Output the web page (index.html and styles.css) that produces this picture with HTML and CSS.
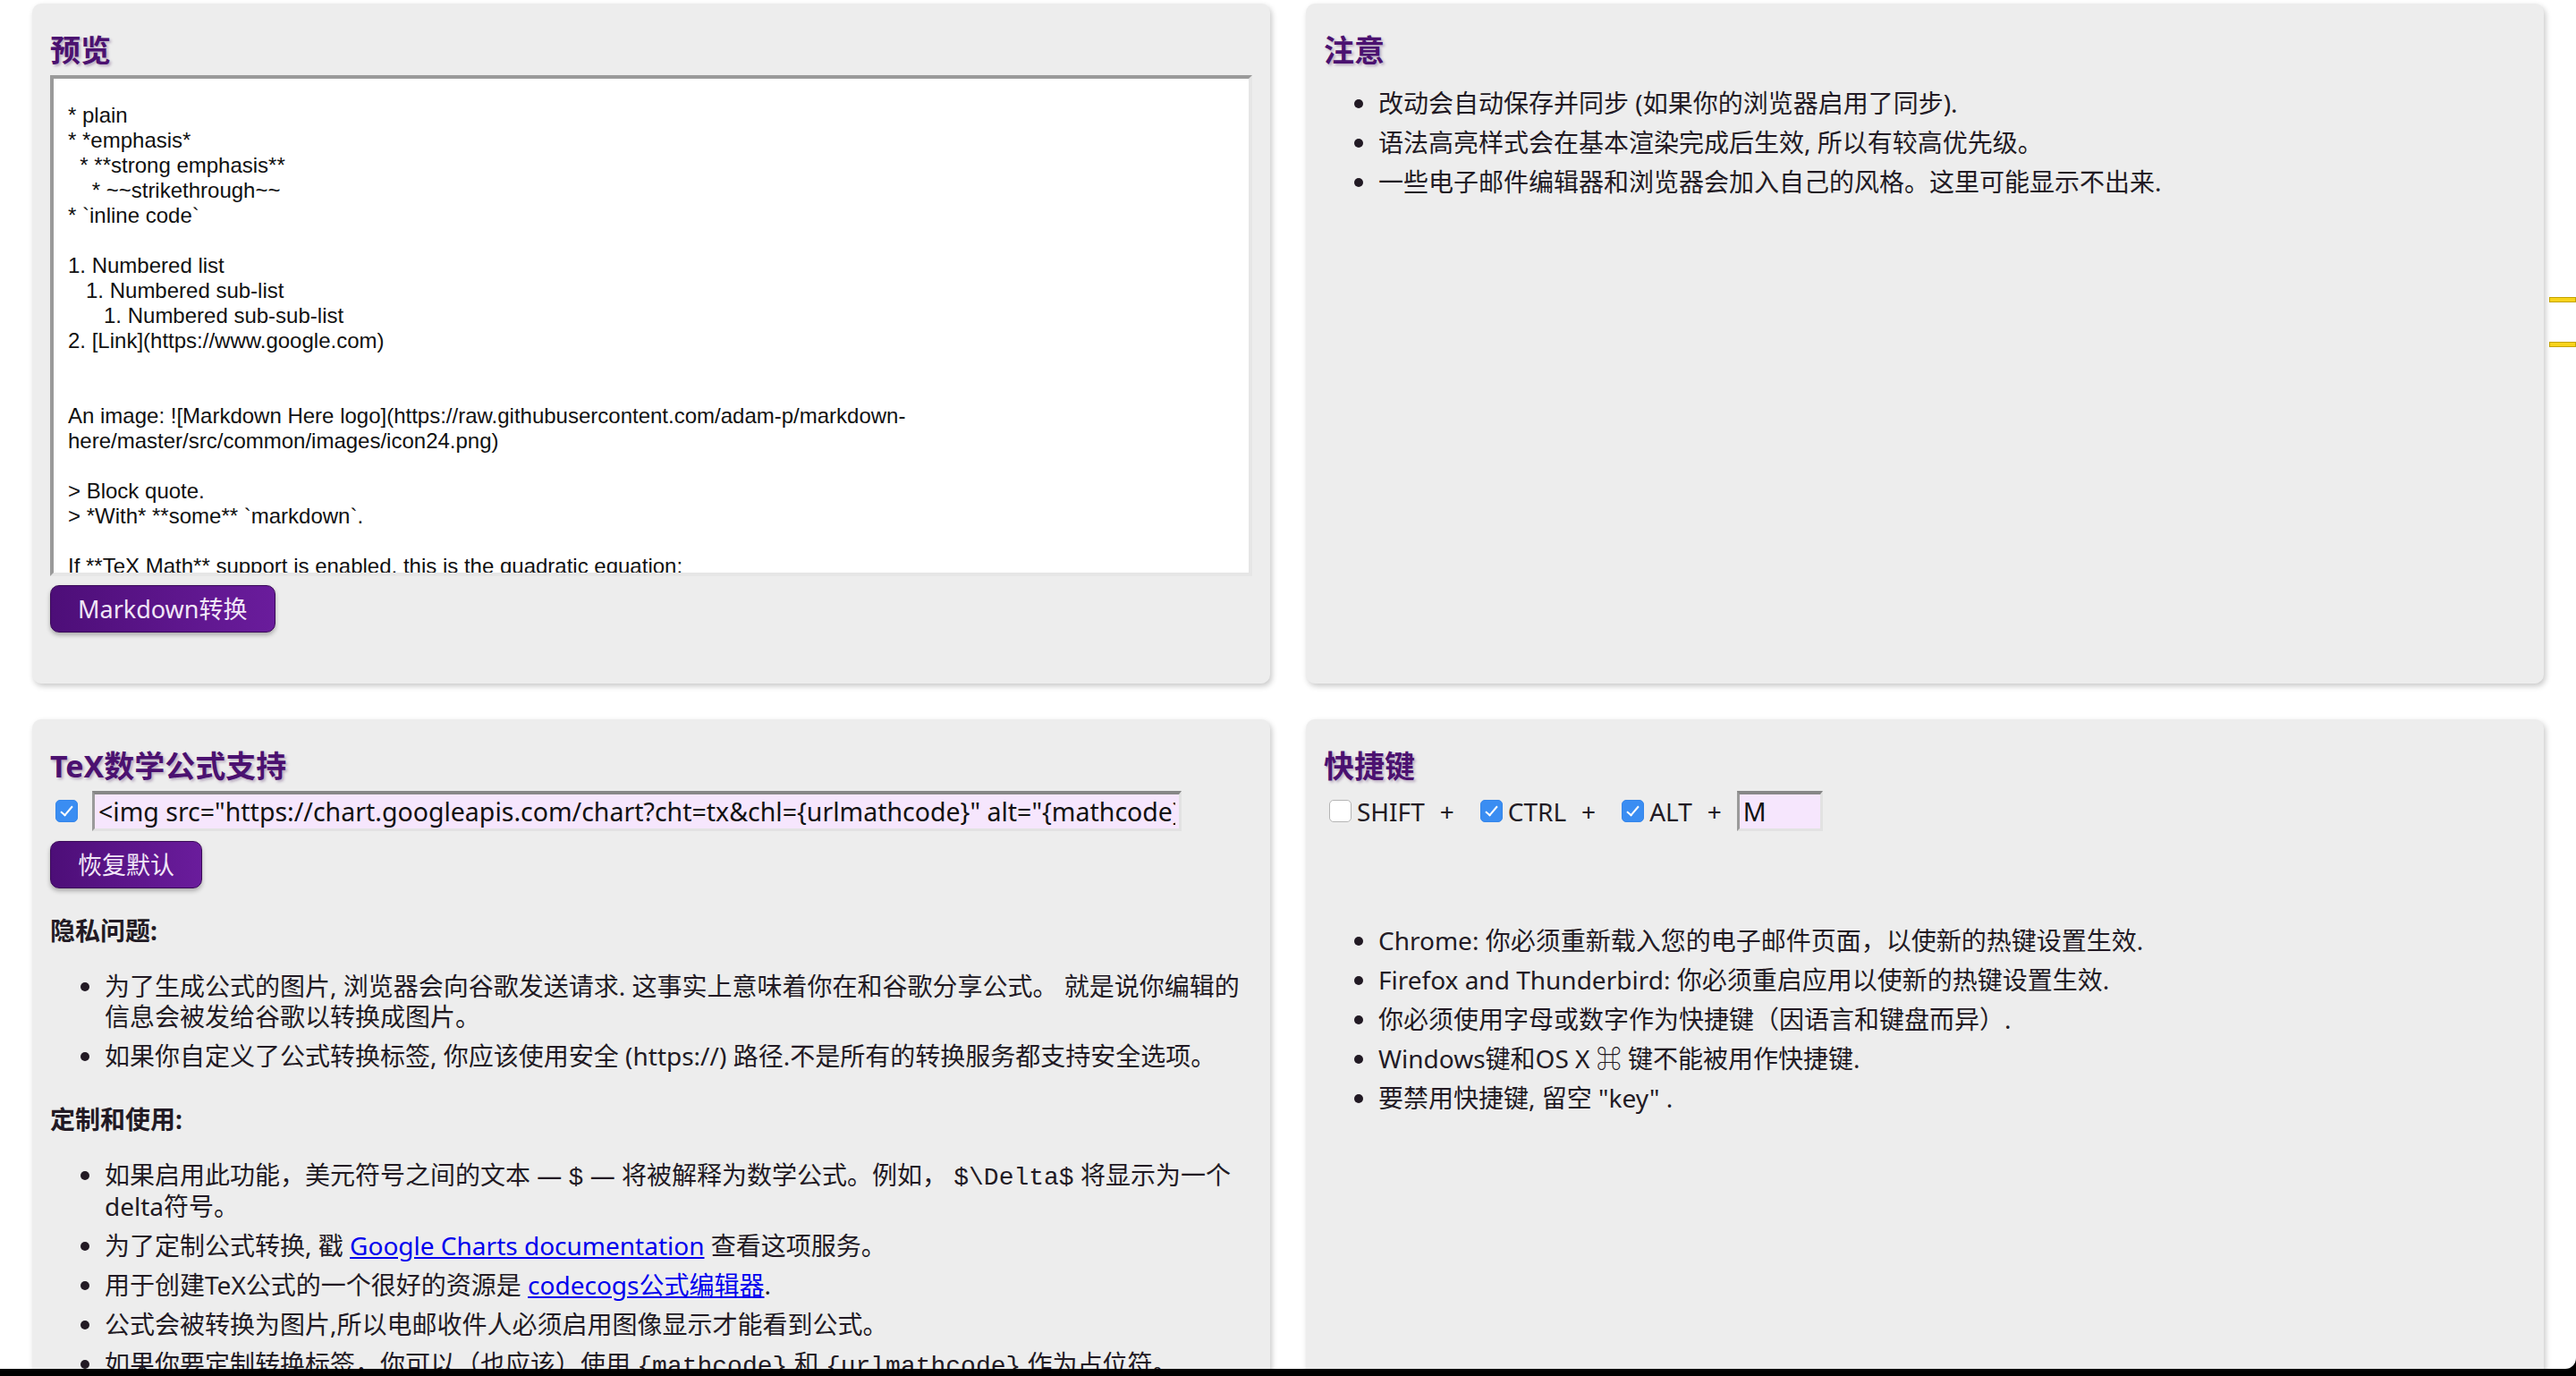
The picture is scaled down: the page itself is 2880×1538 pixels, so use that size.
FILE: index.html
```html
<!DOCTYPE html>
<html lang="zh-CN">
<head>
<meta charset="utf-8">
<title>Markdown Here 选项</title>
<link rel="stylesheet" href="styles.css">
</head>
<body>
<div class="page">
  <section class="card card-top">
    <h2 class="card-title">预览</h2>
    <textarea class="preview" readonly>
* plain
* *emphasis*
  * **strong emphasis**
    * ~~strikethrough~~
* `inline code`

1. Numbered list
   1. Numbered sub-list
      1. Numbered sub-sub-list
2. [Link](https://www.google.com)


An image: ![Markdown Here logo](https://raw.githubusercontent.com/adam-p/markdown-here/master/src/common/images/icon24.png)

> Block quote.
> *With* **some** `markdown`.

If **TeX Math** support is enabled, this is the quadratic equation:
$-b \pm \sqrt{b^2 - 4ac} \over 2a$</textarea>
    <button class="btn btn-render">Markdown转换</button>
  </section>

  <section class="card card-top">
    <h2 class="card-title">注意</h2>
    <ul class="list list-notes">
      <li>改动会自动保存并同步 (如果你的浏览器启用了同步).</li>
      <li>语法高亮样式会在基本渲染完成后生效, 所以有较高优先级。</li>
      <li>一些电子邮件编辑器和浏览器会加入自己的风格。这里可能显示不出来.</li>
    </ul>
  </section>

  <section class="card card-bottom">
    <h2 class="card-title">TeX数学公式支持</h2>
    <div class="math-row">
      <input type="checkbox" class="cb" checked>
      <input type="text" class="field field-math" value="&lt;img src=&quot;https://chart.googleapis.com/chart?cht=tx&amp;chl={urlmathcode}&quot; alt=&quot;{mathcode}&quot; /&gt;">
    </div>
    <button class="btn btn-reset">恢复默认</button>
    <h4 class="sub-title sub-first">隐私问题:</h4>
    <ul class="list list-sub">
      <li>为了生成公式的图片, 浏览器会向谷歌发送请求. 这事实上意味着你在和谷歌分享公式。 就是说你编辑的信息会被发给谷歌以转换成图片。</li>
      <li>如果你自定义了公式转换标签, 你应该使用安全 (https://) 路径.不是所有的转换服务都支持安全选项。</li>
    </ul>
    <h4 class="sub-title">定制和使用:</h4>
    <ul class="list list-sub">
      <li>如果启用此功能，美元符号之间的文本 — <code>$</code> — 将被解释为数学公式。例如， <code>$\Delta$</code> 将显示为一个<br>delta符号。</li>
      <li>为了定制公式转换, 戳 <a href="#">Google Charts documentation</a> 查看这项服务。</li>
      <li>用于创建TeX公式的一个很好的资源是 <a href="#">codecogs公式编辑器</a>.</li>
      <li>公式会被转换为图片,所以电邮收件人必须启用图像显示才能看到公式。</li>
      <li>如果你要定制转换标签，你可以（也应该）使用 <code>{mathcode}</code> 和 <code>{urlmathcode}</code> 作为占位符。</li>
    </ul>
  </section>

  <section class="card card-bottom">
    <h2 class="card-title">快捷键</h2>
    <div class="hotkey-row">
      <input type="checkbox" class="cb">
      <span class="key-label">SHIFT</span>
      <span class="plus">+</span>
      <input type="checkbox" class="cb" checked>
      <span class="key-label">CTRL</span>
      <span class="plus">+</span>
      <input type="checkbox" class="cb" checked>
      <span class="key-label">ALT</span>
      <span class="plus">+</span>
      <input type="text" class="field field-key" value="M">
    </div>
    <ul class="list list-hotkey">
      <li>Chrome: 你必须重新载入您的电子邮件页面，以使新的热键设置生效.</li>
      <li>Firefox and Thunderbird: 你必须重启应用以使新的热键设置生效.</li>
      <li>你必须使用字母或数字作为快捷键（因语言和键盘而异）.</li>
      <li>Windows键和OS X ⌘ 键不能被用作快捷键.</li>
      <li>要禁用快捷键, 留空 "key" .</li>
    </ul>
  </section>
</div>

<div class="edge-mark edge-mark-1"></div>
<div class="edge-mark edge-mark-2"></div>
<div class="screen-bottom"></div>
<div class="screen-corner"><div class="screen-corner-inner"></div></div>
</body>
</html>
```

FILE: styles.css
```css
html, body {
  margin: 0;
  padding: 0;
  background: #ffffff;
  overflow: hidden;
  height: 100%;
}

body {
  font-family: "Noto Sans", "Noto Sans CJK SC", sans-serif;
  color: #221a24;
  font-size: 28px;
}

.page {
  display: grid;
  grid-template-columns: 1fr 1fr;
  grid-template-rows: 760px auto;
  column-gap: 40px;
  row-gap: 40px;
  padding: 4px 36px 0 36px;
}

.card {
  background: #ededed;
  border-radius: 10px;
  box-shadow: 2px 3px 6px rgba(0, 0, 0, 0.22);
  padding: 20px;
  box-sizing: border-box;
}

.card-bottom {
  min-height: 900px;
}

.card-title {
  font-family: "Noto Sans", "Noto Sans CJK SC", sans-serif;
  font-size: 34px;
  font-weight: 700;
  line-height: 40px;
  color: #4b1170;
  margin: 12px 0 8px 0;
  text-shadow: 2px 2px 3px rgba(90, 50, 110, 0.35);
}

.preview {
  display: block;
  width: 100%;
  height: 560px;
  box-sizing: border-box;
  margin: 0;
  padding: 27px 16px 0 16px;
  background: #ffffff;
  border-style: solid;
  border-width: 4px;
  border-color: #9a9a9a #e6e6e6 #e6e6e6 #9a9a9a;
  font-family: "Liberation Sans", Arial, sans-serif;
  font-size: 24px;
  line-height: 28px;
  color: #111;
  resize: none;
  overflow: hidden;
  white-space: pre-wrap;
  outline: none;
}

.btn {
  display: block;
  height: 53px;
  padding: 0 30px;
  border: 1px solid #3a0a58;
  border-radius: 10px;
  background: linear-gradient(to right, #4d0e78, #6a1c9c);
  color: #f1e6f7;
  font-family: "Noto Sans", "Noto Sans CJK SC", sans-serif;
  font-size: 27px;
  line-height: 51px;
  box-shadow: 0 3px 5px rgba(0, 0, 0, 0.28);
  cursor: pointer;
}

.btn-render {
  margin-top: 10px;
}

.btn-reset {
  margin-top: 11px;
}

.math-row {
  display: flex;
  align-items: center;
  height: 45px;
}

.cb {
  -webkit-appearance: none;
  appearance: none;
  flex: none;
  position: relative;
  width: 25px;
  height: 25px;
  margin: 0 0 0 6px;
  box-sizing: border-box;
  border: 1px solid #b5b5b5;
  border-radius: 5px;
  background: #ffffff;
}

.cb:checked {
  background: #3a8df2;
  border-color: #3586ea;
}

.cb:checked::after {
  content: "";
  position: absolute;
  left: 8px;
  top: 3px;
  width: 5px;
  height: 12px;
  border-style: solid;
  border-color: #ffffff;
  border-width: 0 2.5px 2.5px 0;
  transform: rotate(40deg);
}

.field {
  height: 45px;
  box-sizing: border-box;
  margin: 0;
  padding: 0 4px;
  background: #f6e6fd;
  border-style: solid;
  border-width: 4px 3px 3px 3px;
  border-color: #878787 #e2e2e2 #e2e2e2 #9a9a9a;
  font-family: "Noto Sans", "Noto Sans CJK SC", sans-serif;
  font-size: 28.5px;
  color: #111;
  outline: none;
}

.field-math {
  width: 1218px;
  margin-left: 16px;
}

.field-key {
  width: 96px;
  margin-left: -6px;
}

.sub-title {
  font-size: 28px;
  font-weight: 700;
  line-height: 34px;
  margin: 37px 0 0 0;
  color: #221a24;
}

.sub-first {
  margin-top: 30px;
}

.list {
  margin: 0;
  padding: 0 0 0 61px;
  list-style: disc;
}

.list li {
  line-height: 34px;
  margin-bottom: 10px;
}

.list-notes {
  margin-top: 22px;
}

.list-sub {
  margin-top: 28px;
}

.list-hotkey {
  margin-top: 105px;
}

code {
  font-family: "Liberation Mono", "Courier New", monospace;
  font-size: 28px;
  line-height: 1;
}

a {
  color: #0000ee;
  text-decoration: underline;
}

.hotkey-row {
  display: flex;
  align-items: center;
  height: 45px;
}

.key-label {
  margin-left: 6px;
  line-height: 34px;
}

.plus {
  margin: 0 23px 0 17px;
  line-height: 34px;
}

.edge-mark {
  position: fixed;
  left: 2850px;
  width: 30px;
  height: 6px;
  box-sizing: border-box;
  background: #f7d31a;
  border: 1px solid #c4a300;
}

.edge-mark-1 {
  top: 332px;
}

.edge-mark-2 {
  top: 382px;
}

.screen-bottom {
  position: fixed;
  left: 0;
  right: 0;
  bottom: 0;
  height: 8px;
  background: #000;
}

.screen-corner {
  position: fixed;
  right: 0;
  bottom: 8px;
  width: 12px;
  height: 12px;
  background: #000;
}

.screen-corner-inner {
  width: 12px;
  height: 12px;
  background: #ffffff;
  border-bottom-right-radius: 12px;
}
```
